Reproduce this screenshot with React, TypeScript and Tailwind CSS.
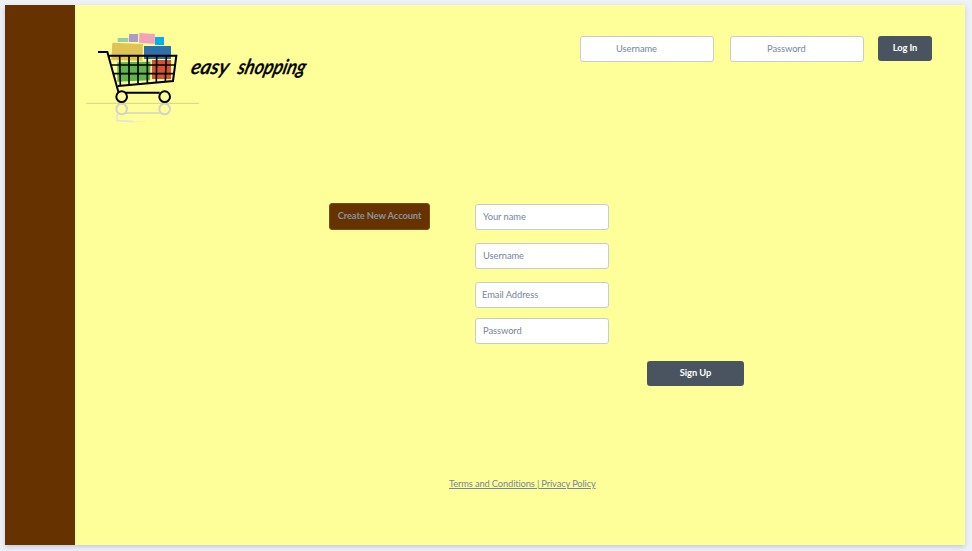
import React from "react";

const fieldBase =
  "block h-[26px] w-[134px] rounded-[3px] border border-[#c6ccd0] bg-white pb-px text-[9.33px] leading-none tracking-[-0.06px] text-[#718096] outline-none placeholder:text-[#75859c] placeholder:opacity-100";

function Field({ label, className, type = "text" }: { label: string; className: string; type?: string }) {
  return <input type={type} placeholder={label} aria-label={label} className={`${fieldBase} ${className}`} />;
}

const wordmark = "font-['Lato',sans-serif] text-[62px] font-semibold italic";

function Logo() {
  return (
    <svg width="235" height="105" viewBox="0 0 705 315" className="overflow-visible" role="img" aria-label="easy shopping">
      <path d="M113 39h32v12h-32z" fill="#94cfa7" />
      <path d="M147 27h27v24h-27z" fill="#aa9bcb" />
      <path d="M178 24l47 3-1 30-47-4z" fill="#f4a1bc" />
      <path d="M225 36h27v24h-27z" fill="#00b0ee" />
      <path d="M97 53l92 4-2 50-93-2z" fill="#dfc455" />
      <path d="M192 63h81v39h-81z" fill="#2e70aa" />
      <path d="M112 112l100-2-2 56-98 4z" fill="#5fb54a" />
      <path d="M216 105h57v57h-57z" fill="#d45432" />
      <g fill="none" stroke="#e8d675" strokeWidth="2">
        <path d="M92 108h98M213 105v60M188 60v32" />
      </g>
      <g fill="none" stroke="#d3d2cb" strokeWidth="6">
        <circle cx="125" cy="252" r="16" />
        <circle cx="254" cy="252" r="16" />
        <path d="M137 264h104" strokeWidth="5" />
        <path d="M112 264l-1 23 50 3" stroke="#e6e4d8" strokeWidth="5" />
        <path d="M155 290h40" stroke="#f2efc5" strokeWidth="3" />
      </g>
      <path d="M18 235h339" stroke="#d5d486" strokeWidth="3" />
      <g fill="none" stroke="#000">
        <path d="M54 81h28l34 123M86 92h203l-10 76-165 15M135 203h104" strokeWidth="6" />
        <path d="M94 120h191M102 146h180" strokeWidth="5" />
        <path d="M119 93l2 88M147 93v86M174 93v83M202 93v81M230 93l-1 78M259 93l-3 76" strokeWidth="5" />
        <circle cx="125" cy="215" r="16" strokeWidth="6" />
        <circle cx="254" cy="215" r="16" strokeWidth="6" />
      </g>
      <g fill="#000" stroke="#000" strokeWidth="1">
        <text transform="translate(330 146) skewX(-14)" textLength="112" lengthAdjust="spacingAndGlyphs" className={wordmark}>
          easy
        </text>
        <text transform="translate(470 146) skewX(-14)" textLength="203" lengthAdjust="spacingAndGlyphs" className={wordmark}>
          shopping
        </text>
      </g>
    </svg>
  );
}

export default function App() {
  return (
    <div className="h-[551px] w-[972px] overflow-hidden bg-[#eef2f7] p-[5px] font-['Lato',sans-serif]">
      <div className="flex h-[540px] w-[960px] bg-[#ffff99] shadow-[0_2px_5px_rgba(70,85,130,0.25)]">
        <aside className="w-[70px] shrink-0 bg-[#663300]" />
        <main className="flex flex-1 flex-col">
          <header className="flex h-[198px] items-start pl-[5px] pt-[20px]">
            <Logo />
            <form className="ml-[265px] mt-[11px] flex" onSubmit={(e) => e.preventDefault()}>
              <Field label="Username" className="pl-[35px]" />
              <Field label="Password" type="password" className="ml-4 pl-[36px]" />
              <button className="ml-[14px] h-[25px] w-[54px] rounded-[3px] bg-[#4a5460] pb-px text-[9.33px] font-bold leading-none tracking-[-0.1px] text-white">
                Log In
              </button>
            </form>
          </header>
          <section className="flex h-[158px] items-start pl-[254px]">
            <button className="h-[27px] w-[101px] rounded-[3px] border border-[#7a4c18] bg-[#663300] pb-px text-[9.33px] font-bold leading-none tracking-[-0.1px] text-[#8792a0]">
              Create New Account
            </button>
            <form className="ml-[45px] mt-px" onSubmit={(e) => e.preventDefault()}>
              <Field label="Your name" className="pl-[7px]" />
              <Field label="Username" className="mt-[13px] pl-[7px]" />
              <Field label="Email Address" className="mt-[13px] pl-[6px]" />
              <Field label="Password" type="password" className="mt-[10px] pl-[7px]" />
            </form>
          </section>
          <div className="pl-[572px]">
            <button className="block h-[25px] w-[97px] rounded-[3px] bg-[#4a5460] pb-px text-[9.33px] font-bold leading-none tracking-[-0.1px] text-white">
              Sign Up
            </button>
          </div>
          <footer className="mt-[91px] pl-[374px] text-[9.33px] leading-[14px] tracking-[-0.14px] text-[#75859c]">
            <a href="#terms" className="underline">Terms and Conditions | Privacy Policy</a>
          </footer>
        </main>
      </div>
    </div>
  );
}
